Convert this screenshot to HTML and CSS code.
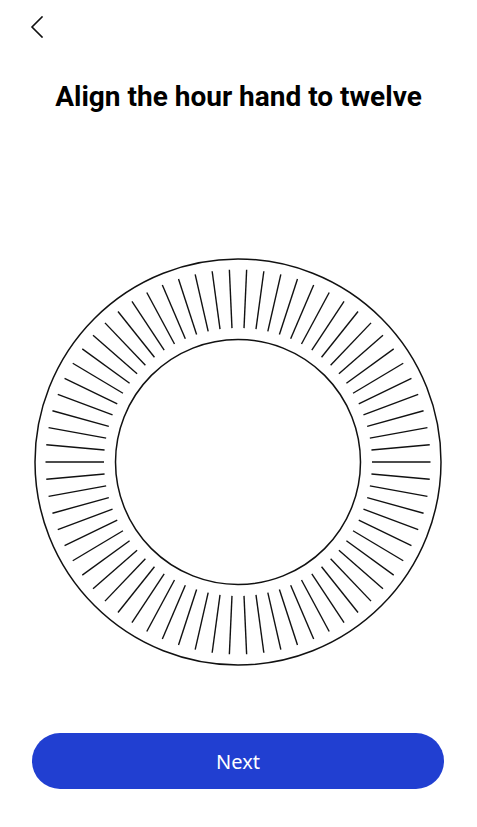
FILE: index.html
```html
<!DOCTYPE html>
<html lang="en">
<head>
<meta charset="utf-8">
<title>Align the hour hand</title>
<link rel="stylesheet" href="styles.css">
</head>
<body>
<div class="screen">
  <div class="topbar">
    <button class="back" aria-label="Back">
      <svg width="14" height="22" viewBox="0 0 14 22"><path d="M12 1 L2 11 L12 21" fill="none" stroke="#111" stroke-width="1.6" stroke-linecap="square"/></svg>
    </button>
  </div>
  <h1 class="title">Align the hour hand to twelve</h1>
  <div class="dial">
    <svg width="410" height="410" viewBox="-205 -205 410 410">
      <defs><line id="t" x1="134" y1="0" x2="192.5" y2="0" stroke="#111" stroke-width="1.4"/></defs>
      <circle r="203" fill="none" stroke="#111" stroke-width="1.5"/>
      <circle r="122.5" fill="none" stroke="#111" stroke-width="1.5"/>
      <use href="#t"/>
      <use href="#t" transform="rotate(5.1429)"/>
      <use href="#t" transform="rotate(10.2857)"/>
      <use href="#t" transform="rotate(15.4286)"/>
      <use href="#t" transform="rotate(20.5714)"/>
      <use href="#t" transform="rotate(25.7143)"/>
      <use href="#t" transform="rotate(30.8571)"/>
      <use href="#t" transform="rotate(36)"/>
      <use href="#t" transform="rotate(41.1429)"/>
      <use href="#t" transform="rotate(46.2857)"/>
      <use href="#t" transform="rotate(51.4286)"/>
      <use href="#t" transform="rotate(56.5714)"/>
      <use href="#t" transform="rotate(61.7143)"/>
      <use href="#t" transform="rotate(66.8571)"/>
      <use href="#t" transform="rotate(72)"/>
      <use href="#t" transform="rotate(77.1429)"/>
      <use href="#t" transform="rotate(82.2857)"/>
      <use href="#t" transform="rotate(87.4286)"/>
      <use href="#t" transform="rotate(92.5714)"/>
      <use href="#t" transform="rotate(97.7143)"/>
      <use href="#t" transform="rotate(102.8571)"/>
      <use href="#t" transform="rotate(108)"/>
      <use href="#t" transform="rotate(113.1429)"/>
      <use href="#t" transform="rotate(118.2857)"/>
      <use href="#t" transform="rotate(123.4286)"/>
      <use href="#t" transform="rotate(128.5714)"/>
      <use href="#t" transform="rotate(133.7143)"/>
      <use href="#t" transform="rotate(138.8571)"/>
      <use href="#t" transform="rotate(144)"/>
      <use href="#t" transform="rotate(149.1429)"/>
      <use href="#t" transform="rotate(154.2857)"/>
      <use href="#t" transform="rotate(159.4286)"/>
      <use href="#t" transform="rotate(164.5714)"/>
      <use href="#t" transform="rotate(169.7143)"/>
      <use href="#t" transform="rotate(174.8571)"/>
      <use href="#t" transform="rotate(180)"/>
      <use href="#t" transform="rotate(185.1429)"/>
      <use href="#t" transform="rotate(190.2857)"/>
      <use href="#t" transform="rotate(195.4286)"/>
      <use href="#t" transform="rotate(200.5714)"/>
      <use href="#t" transform="rotate(205.7143)"/>
      <use href="#t" transform="rotate(210.8571)"/>
      <use href="#t" transform="rotate(216)"/>
      <use href="#t" transform="rotate(221.1429)"/>
      <use href="#t" transform="rotate(226.2857)"/>
      <use href="#t" transform="rotate(231.4286)"/>
      <use href="#t" transform="rotate(236.5714)"/>
      <use href="#t" transform="rotate(241.7143)"/>
      <use href="#t" transform="rotate(246.8571)"/>
      <use href="#t" transform="rotate(252)"/>
      <use href="#t" transform="rotate(257.1429)"/>
      <use href="#t" transform="rotate(262.2857)"/>
      <use href="#t" transform="rotate(267.4286)"/>
      <use href="#t" transform="rotate(272.5714)"/>
      <use href="#t" transform="rotate(277.7143)"/>
      <use href="#t" transform="rotate(282.8571)"/>
      <use href="#t" transform="rotate(288)"/>
      <use href="#t" transform="rotate(293.1429)"/>
      <use href="#t" transform="rotate(298.2857)"/>
      <use href="#t" transform="rotate(303.4286)"/>
      <use href="#t" transform="rotate(308.5714)"/>
      <use href="#t" transform="rotate(313.7143)"/>
      <use href="#t" transform="rotate(318.8571)"/>
      <use href="#t" transform="rotate(324)"/>
      <use href="#t" transform="rotate(329.1429)"/>
      <use href="#t" transform="rotate(334.2857)"/>
      <use href="#t" transform="rotate(339.4286)"/>
      <use href="#t" transform="rotate(344.5714)"/>
      <use href="#t" transform="rotate(349.7143)"/>
      <use href="#t" transform="rotate(354.8571)"/>
    </svg>
  </div>
  <button class="next">Next</button>
</div>
</body>
</html>
```
FILE: styles.css
```css
html, body {
  margin: 0;
  padding: 0;
  background: #ffffff;
}
.screen {
  width: 477px;
  height: 827px;
  display: flex;
  flex-direction: column;
  font-family: "Noto Sans", "Open Sans", sans-serif;
  color: #111;
}
.topbar {
  height: 54px;
  display: flex;
  align-items: center;
  padding-left: 30px;
}
.back {
  background: none;
  border: 0;
  padding: 0;
  margin: 0;
  width: 14px;
  height: 22px;
  display: block;
}
.back svg {
  display: block;
}
.title {
  margin: 26px 0 0 0;
  font-family: Roboto, "Noto Sans", sans-serif;
  font-size: 28px;
  line-height: 34px;
  font-weight: 700;
  text-align: center;
  color: #000;
}
.dial {
  margin-top: 143px;
  display: flex;
  justify-content: center;
}
.dial svg {
  display: block;
  margin-left: -1px;
}
.next {
  margin: auto 33px 38px 32px;
  height: 56px;
  border: 0;
  border-radius: 28px;
  background: #213fd1;
  color: #fff;
  font-family: "Noto Sans", "Open Sans", sans-serif;
  font-size: 20px;
  font-weight: 400;
}
```
